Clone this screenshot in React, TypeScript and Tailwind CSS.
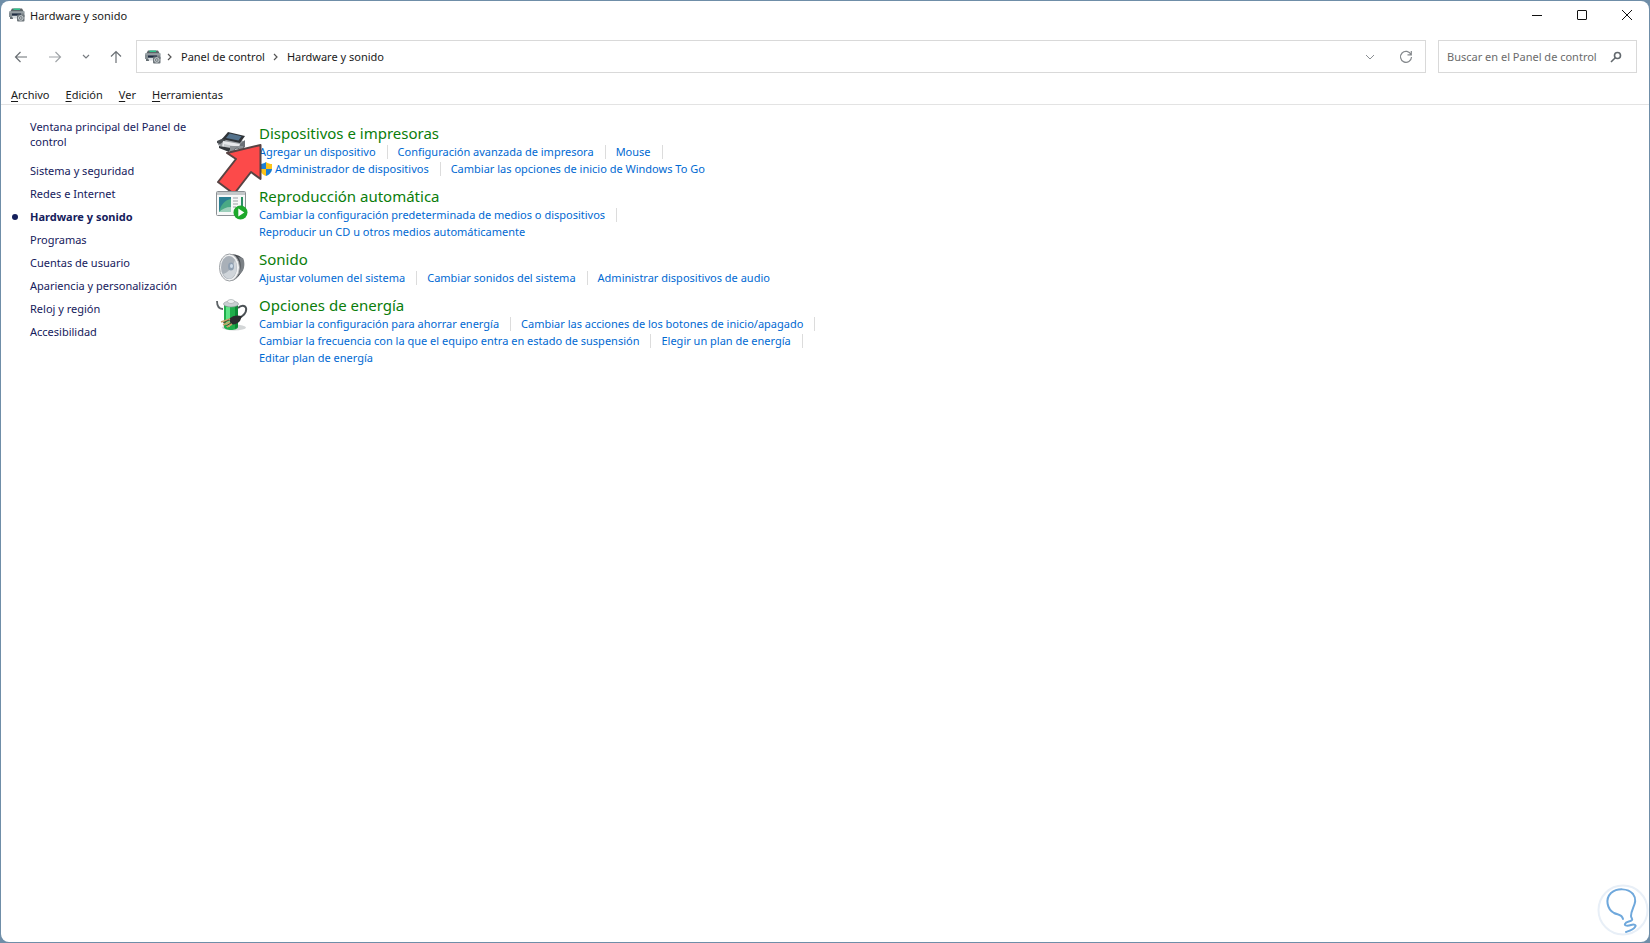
import type { ReactNode } from 'react'

type Task = { label: string; shield?: boolean }

type Category = {
  title: string
  icon: ReactNode
  rows: Task[][]
  pointer?: boolean
}

function DeviceIcon() {
  return (
    <svg width="16" height="16" viewBox="0 0 16 16" aria-hidden="true">
      <path d="M3 1.500h10l2 3.500H1z" fill="#5b6468" />
      <path d="M4.500 1.500h6.500v1.500H4.500z" fill="#2fc08a" />
      <path d="M0 4.500h15.500V10H0z" fill="#858e93" />
      <path d="M0 4.500h15.500v1H0z" fill="#a9b0b4" />
      <path d="M3 6.500h9v2H3z" fill="#1f2d42" />
      <path d="M1 10h3v2H1z" fill="#666f74" />
      <path d="M3 9h6v2.500H4z" fill="#d5dadd" />
      <rect x="8" y="7.500" width="7.500" height="7" rx="1" fill="#6d757a" />
      <circle cx="11.800" cy="11" r="2.300" fill="none" stroke="#cfd5d8" />
      <circle cx="11.800" cy="11" r="0.800" fill="#dfe4e6" />
    </svg>
  )
}

function PrinterIcon() {
  return (
    <svg width="32" height="32" viewBox="0 0 32 32" aria-hidden="true">
      <path d="M2 14 9 10 28 14 28 22 20 26 2 18z" fill="#9a9ea2" />
      <path d="M1 14 8 11 10 13 4 17 1 16z" fill="#4a4e52" />
      <path d="M7 14 24 17 22 24 6 20z" fill="#e6e8ea" />
      <path d="M8 17 20 19.500 19 22 8 20z" fill="#c3c7ca" />
      <path d="M24 17 29 13 29 20 23 24z" fill="#6b7075" />
      <path d="M12 5 29 9 24 16 6 12z" fill="#2f3337" />
      <path d="M13.500 6.500 25.500 9.200 22.500 13.500 10 11z" fill="#54728c" />
      <path d="M3 19 15 21 13 25 3 21z" fill="#33373b" />
      <path d="M14 19h13v9H14z" fill="#8b9094" />
      <circle cx="21" cy="24" r="3" fill="#c3c8cb" stroke="#6b7075" />
    </svg>
  )
}

function AutoplayIcon() {
  return (
    <svg width="32" height="32" viewBox="0 0 32 32" aria-hidden="true">
      <rect x="0.500" y="1.500" width="29" height="24" rx="1" fill="#f7f8f8" stroke="#8b9094" />
      <path d="M1 2h28v3H1z" fill="#c4c8ca" />
      <rect x="3" y="7" width="12" height="15" fill="#2b7f92" />
      <path d="M3 22C5 14 9 10 15 9v13z" fill="#4aa985" />
      <path d="M3 22c3-3 7-5 12-5v5z" fill="#d5eadf" opacity=".6" />
      <path d="M17 8h5M17 11h5M17 14h5M17 17h3" stroke="#9aa0a4" />
      <path d="M25 7h2v9h-2z" fill="#2b8f63" />
      <circle cx="24.500" cy="22.500" r="7" fill="#1da82b" />
      <path d="M22.300 18.500v8l6-4z" fill="#fff" />
    </svg>
  )
}

function SpeakerIcon() {
  return (
    <svg width="32" height="32" viewBox="0 0 32 32" aria-hidden="true">
      <path d="M14 1c6 0 10 2 12 4 3 4 2 11-1 15-3 4-6 8-11 8z" fill="#4b4f54" />
      <path d="M22 4c3 3 4 12 0 18l4-3c3-4 3-10 1-14z" fill="#7c8186" />
      <ellipse cx="13.500" cy="14.500" rx="10" ry="13.500" fill="#f0f1f2" stroke="#9da1a5" />
      <ellipse cx="13" cy="14.500" rx="8" ry="11.500" fill="#a9b0b8" />
      <path d="M7 21c4-1 9-5 12-14 3 7 2 15-4 18.500-3 1-6-1-8-4.500z" fill="#d0d5da" />
      <ellipse cx="15" cy="13.500" rx="3" ry="4" fill="#8f9fb0" />
      <ellipse cx="15.500" cy="13" rx="1.500" ry="2" fill="#cddbe8" />
    </svg>
  )
}

function EnergyIcon() {
  return (
    <svg width="32" height="32" viewBox="0 0 32 32" aria-hidden="true">
      <ellipse cx="18" cy="28.500" rx="12" ry="3" fill="#d3d6d7" />
      <path d="M8 4v24c0 4 14 4 14 0V4z" fill="#1fae4b" />
      <path d="M10 8h4v20h-4z" fill="#5ee487" />
      <path d="M19 7h3v21l-3 2z" fill="#0c8a35" />
      <ellipse cx="15" cy="5" rx="7.500" ry="3" fill="#c8ced1" stroke="#8e9699" strokeWidth=".6" />
      <ellipse cx="15" cy="2.500" rx="3.500" ry="2" fill="#eceff0" stroke="#9ba2a5" strokeWidth=".6" />
      <path d="M1 2c0 5 2 8 6 8" fill="none" stroke="#5c6266" strokeWidth="1.800" />
      <path d="M22 9c3-3 7-3 8 0 1 5-3 8-7 10" fill="none" stroke="#4b5155" strokeWidth="2" />
      <path d="M13 20c4-4 8-4 13-3l-2 5c-3 3-6 4-9 3z" fill="#2b2d2f" />
      <path d="m14 20-9 3M14 23l-7 3M16 25l-5 3" stroke="#c9a06a" strokeWidth="1.600" />
      <path d="m13 21-6 3M15 24l-5 3" stroke="#53402a" strokeWidth="1" />
    </svg>
  )
}

function ShieldIcon() {
  return (
    <svg width="14" height="14" viewBox="0 0 14 14" className="mr-0.5 shrink-0" aria-hidden="true">
      <path d="M7 0C5 1.500 3 2 1 2v5h6z" fill="#1b7fd6" />
      <path d="M7 0c2 1.500 4 2 6 2v5H7z" fill="#fcc419" />
      <path d="M1 7c0 3 3 6 6 7V7z" fill="#fcc419" />
      <path d="M13 7c0 3-3 6-6 7V7z" fill="#1b7fd6" />
    </svg>
  )
}

function Pointer() {
  return (
    <svg
      className="pointer-events-none absolute left-0 top-4"
      width="50"
      height="60"
      viewBox="0 0 50 60"
      aria-hidden="true"
    >
      <path
        d="M44.500 6 11 14l9 6L2 43l16 12L35 33l9.500 7z"
        fill="#fc4a4a"
        stroke="#574343"
        strokeWidth="2"
        strokeLinejoin="round"
      />
    </svg>
  )
}

const menus = ['Archivo', 'Edición', 'Ver', 'Herramientas']

const sections = [
  'Sistema y seguridad',
  'Redes e Internet',
  'Hardware y sonido',
  'Programas',
  'Cuentas de usuario',
  'Apariencia y personalización',
  'Reloj y región',
  'Accesibilidad',
]

const categories: Category[] = [
  {
    title: 'Dispositivos e impresoras',
    icon: <PrinterIcon />,
    pointer: true,
    rows: [
      [{ label: 'Agregar un dispositivo' }, { label: 'Configuración avanzada de impresora' }, { label: 'Mouse' }],
      [
        { label: 'Administrador de dispositivos', shield: true },
        { label: 'Cambiar las opciones de inicio de Windows To Go' },
      ],
    ],
  },
  {
    title: 'Reproducción automática',
    icon: <AutoplayIcon />,
    rows: [
      [{ label: 'Cambiar la configuración predeterminada de medios o dispositivos' }],
      [{ label: 'Reproducir un CD u otros medios automáticamente' }],
    ],
  },
  {
    title: 'Sonido',
    icon: <SpeakerIcon />,
    rows: [
      [
        { label: 'Ajustar volumen del sistema' },
        { label: 'Cambiar sonidos del sistema' },
        { label: 'Administrar dispositivos de audio' },
      ],
    ],
  },
  {
    title: 'Opciones de energía',
    icon: <EnergyIcon />,
    rows: [
      [
        { label: 'Cambiar la configuración para ahorrar energía' },
        { label: 'Cambiar las acciones de los botones de inicio/apagado' },
      ],
      [
        { label: 'Cambiar la frecuencia con la que el equipo entra en estado de suspensión' },
        { label: 'Elegir un plan de energía' },
      ],
      [{ label: 'Editar plan de energía' }],
    ],
  },
]

function TitleBar() {
  return (
    <header className="flex h-7 items-center justify-between pl-2">
      <div className="flex items-center gap-[5px]">
        <DeviceIcon />
        <h1>Hardware y sonido</h1>
      </div>
      <div className="flex">
        <button aria-label="Minimizar" className="flex h-7 w-[45px] items-center justify-center">
          <svg width="10" height="10" viewBox="0 0 10 10" fill="none" stroke="#111">
            <path d="M0 5.500h10" />
          </svg>
        </button>
        <button aria-label="Maximizar" className="flex h-7 w-[45px] items-center justify-center">
          <svg width="10" height="10" viewBox="0 0 10 10" fill="none" stroke="#111">
            <rect x="0.500" y="0.500" width="9" height="9" rx="0.500" />
          </svg>
        </button>
        <button aria-label="Cerrar" className="flex h-7 w-[45px] items-center justify-center">
          <svg width="10" height="10" viewBox="0 0 10 10" fill="none" stroke="#111">
            <path d="m0 0 10 10M10 0 0 10" />
          </svg>
        </button>
      </div>
    </header>
  )
}

function Crumb({ children }: { children: string }) {
  return (
    <>
      <svg width="6" height="8" viewBox="0 0 6 8" fill="none" stroke="#555" strokeWidth="1.200" aria-hidden="true">
        <path d="m1 1 3 3-3 3" />
      </svg>
      <a href="#" className="mx-2">
        {children}
      </a>
    </>
  )
}

function NavBar() {
  return (
    <div className="mt-[11px] flex items-center px-3">
      <nav className="flex items-center gap-5 pl-px pr-3.5" aria-label="Historial">
        <button aria-label="Atrás">
          <svg width="14" height="14" viewBox="0 0 14 14" fill="none" stroke="#6b7075" strokeWidth="1.200">
            <path d="M13 7H1.500M6.500 2l-5 5 5 5" />
          </svg>
        </button>
        <button aria-label="Adelante">
          <svg width="14" height="14" viewBox="0 0 14 14" fill="none" stroke="#a0a4a8" strokeWidth="1.200">
            <path d="M1 7h11.500M7.500 2l5 5-5 5" />
          </svg>
        </button>
        <button aria-label="Ubicaciones recientes">
          <svg width="8" height="8" viewBox="0 0 8 8" fill="none" stroke="#777b80" strokeWidth="1.200">
            <path d="m1 2 3 3 3-3" />
          </svg>
        </button>
        <button aria-label="Subir">
          <svg width="12" height="14" viewBox="0 0 12 14" fill="none" stroke="#6b7075" strokeWidth="1.200">
            <path d="M6 13V1.500M1 6.500l5-5 5 5" />
          </svg>
        </button>
      </nav>
      <div className="flex h-[33px] flex-1 items-center border border-[#d9d9d9] bg-white pl-2">
        <DeviceIcon />
        <div className="ml-1.5 flex items-center">
          <Crumb>Panel de control</Crumb>
          <Crumb>Hardware y sonido</Crumb>
        </div>
        <div className="ml-auto flex items-center gap-6 pr-3">
          <button aria-label="Ubicaciones anteriores">
            <svg width="10" height="10" viewBox="0 0 10 10" fill="none" stroke="#8a8e92">
              <path d="m1 3 4 4 4-4" />
            </svg>
          </button>
          <button aria-label="Actualizar">
            <svg width="14" height="14" viewBox="0 0 14 14" fill="none" stroke="#85898d" strokeWidth="1.200">
              <path d="M12 4.500A5.500 5.500 0 1 0 12.500 7M12.300 1v3.800H8.500" />
            </svg>
          </button>
        </div>
      </div>
      <div className="ml-3 flex h-[33px] w-[199px] items-center border border-[#d9d9d9] bg-white pl-2 pr-3.5">
        <input
          type="search"
          aria-label="Buscar en el Panel de control"
          placeholder="Buscar en el Panel de control"
          className="min-w-0 flex-1 outline-none placeholder:text-[#6b6b6b]"
        />
        <svg width="12" height="12" viewBox="0 0 12 12" fill="none" stroke="#62686d" strokeWidth="1.600" aria-hidden="true">
          <circle cx="7.500" cy="4.500" r="3" />
          <path d="M5.300 6.700 1 11" />
        </svg>
      </div>
    </div>
  )
}

function CategoryItem({ category }: { category: Category }) {
  return (
    <section className="relative flex gap-[11px]">
      <div className="w-8 shrink-0 pt-1">{category.icon}</div>
      <div>
        <h2 className="text-[15px] leading-5">
          <a href="#" className="text-[#0a7d0a]">
            {category.title}
          </a>
        </h2>
        {category.rows.map((row, r) => (
          <ul key={r} className="flex h-[17px] items-center text-[#0069d2]">
            {row.map((task, t) => {
              const last = r === category.rows.length - 1 && t === row.length - 1
              return (
                <li key={task.label} className="flex items-center whitespace-nowrap">
                  {task.shield && <ShieldIcon />}
                  <a href="#">{task.label}</a>
                  {!last && <span className="ml-[11px] mr-2.5 h-3.5 w-px bg-[#dcdcdc]" />}
                </li>
              )
            })}
          </ul>
        ))}
      </div>
      {category.pointer && <Pointer />}
    </section>
  )
}

export default function App() {
  return (
    <div className="min-h-screen bg-[#6f8ea8] p-px">
      <div className="relative flex min-h-[calc(100vh-2px)] flex-col rounded-lg bg-white font-['Noto_Sans','Open_Sans',sans-serif] text-[11px] leading-[15px] text-[#1a1a1a]">
        <TitleBar />
        <NavBar />
        <div className="mt-3 flex h-5 items-center gap-4 border-b border-[#e3e3e3] pl-2.5" role="menubar">
          {menus.map((menu) => (
            <button key={menu} role="menuitem">
              <span className="underline underline-offset-2">{menu[0]}</span>
              {menu.slice(1)}
            </button>
          ))}
        </div>
        <div className="flex pt-3.5">
          <aside className="w-[215px] shrink-0 pl-[29px] pr-6 text-[#15205c]">
            <a href="#" className="block">
              Ventana principal del Panel de control
            </a>
            <ul className="mt-2.5">
              {sections.map((section) => (
                <li key={section} className="relative flex h-[23px] items-center">
                  {section === 'Hardware y sonido' ? (
                    <>
                      <span className="absolute -left-[18px] size-1.5 rounded-full bg-[#15205c]" />
                      <a href="#" aria-current="page" className="font-bold">
                        {section}
                      </a>
                    </>
                  ) : (
                    <a href="#">{section}</a>
                  )}
                </li>
              ))}
            </ul>
          </aside>
          <main className="flex flex-col gap-[9px] pt-1">
            {categories.map((category) => (
              <CategoryItem key={category.title} category={category} />
            ))}
          </main>
        </div>
        <svg
          className="absolute bottom-1.5 right-0"
          width="52"
          height="52"
          viewBox="0 0 52 52"
          fill="none"
          aria-hidden="true"
        >
          <circle cx="26" cy="26" r="24.500" fill="#fff" stroke="#e8eff7" strokeWidth="2" />
          <path
            d="M26 35c-1-5-5-4-9-6-7-4-9-14-3-20 6-5 17-5 22 1 6 8-2 14-2 22 0 2 2 3 1 4-2 2-6 1-7 4-1 2 3 2 6 1s6 0 4 2c-2 3-6 4-9 5"
            stroke="#6fa8dc"
            strokeWidth="2"
            strokeLinecap="round"
          />
        </svg>
      </div>
    </div>
  )
}
